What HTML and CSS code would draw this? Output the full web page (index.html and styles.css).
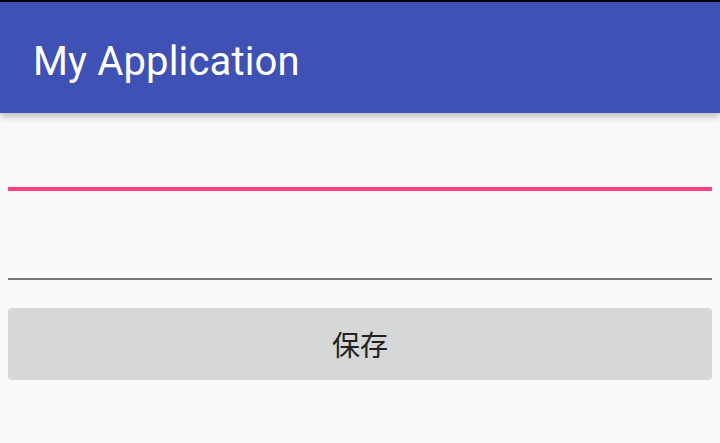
FILE: index.html
```html
<html lang="zh">
<head>
  <title>My Application</title>
  <link rel="stylesheet" href="styles.css">
</head>
<body>
  <div class="status"></div>
  <header class="appbar">
    <h1 class="appbar-title">My Application</h1>
  </header>
  <main class="form">
    <div class="field field-focused"></div>
    <div class="field"></div>
    <button class="btn-save">保存</button>
  </main>
</body>
</html>
```

FILE: styles.css
```css
body {
  margin: 0;
  background-color: #FAFAFA;
  font-family: Roboto, "Noto Sans CJK SC", sans-serif;
  height: 443px;
  overflow: hidden;
}

.status {
  height: 2px;
  background-color: #000;
}

.appbar {
  position: relative;
  z-index: 1;
  height: 111px;
  box-sizing: border-box;
  padding: 40px 0 0 33px;
  background-color: #3F51B5;
  box-shadow: 0 3px 8px rgba(0, 0, 0, 0.28);
}

.appbar-title {
  margin: 0;
  font-size: 40px;
  font-weight: 400;
  line-height: 40px;
  letter-spacing: 0.15px;
  color: #fff;
}

.form {
  display: flex;
  flex-direction: column;
  padding: 0 8px;
}

.field {
  height: 87px;
  border-bottom: 2px solid #777;
}

.field-focused {
  height: 74px;
  border-bottom: 4px solid #FF4081;
}

.btn-save {
  margin-top: 28px;
  height: 72px;
  border: 0;
  border-radius: 4px;
  background-color: #D6D7D7;
  color: #222;
  font-family: Roboto, "Noto Sans CJK SC", sans-serif;
  font-size: 28px;
}
```
